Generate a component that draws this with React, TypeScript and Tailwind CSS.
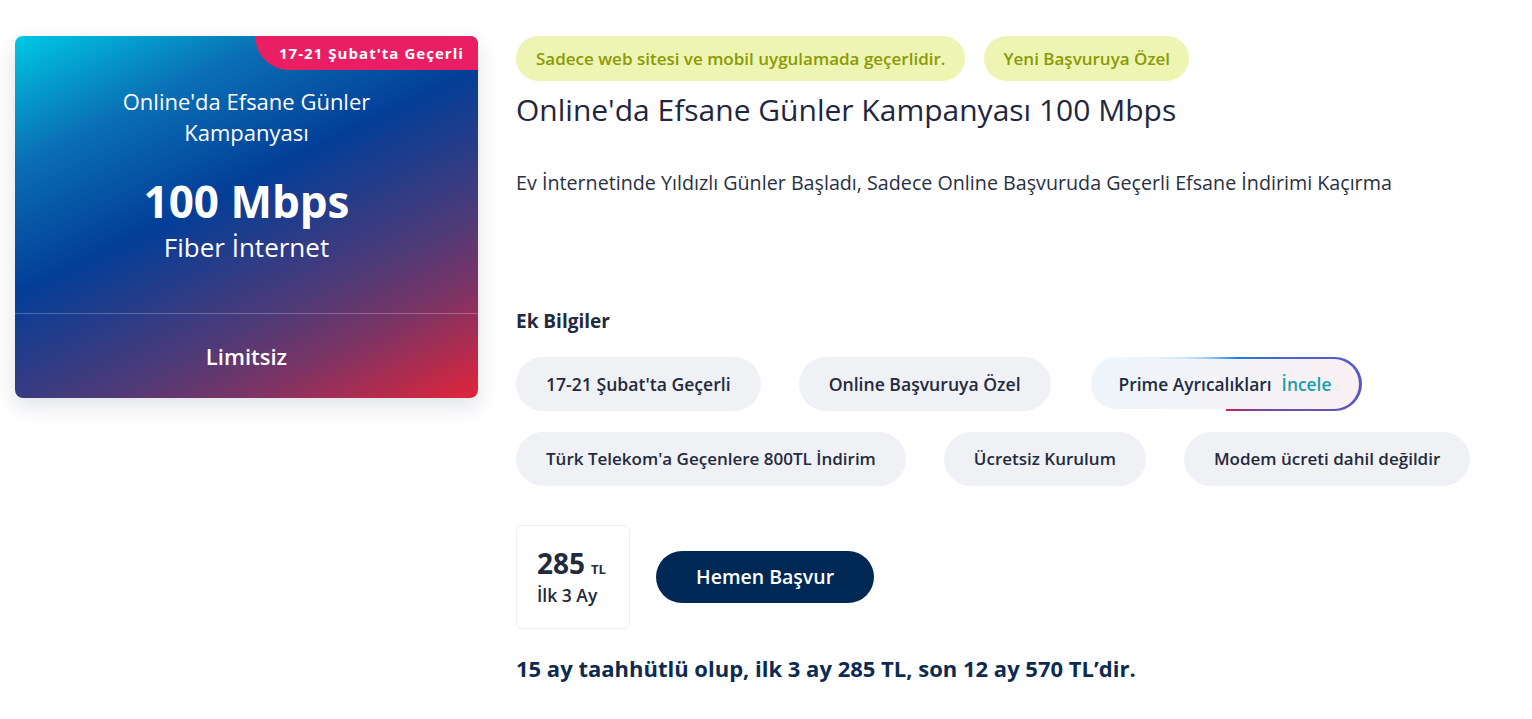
const FONT = "font-['Open_Sans','Liberation_Sans',sans-serif]";

const EXTRAS = [
  ["17-21 Şubat'ta Geçerli", "Online Başvuruya Özel"],
  ["Türk Telekom'a Geçenlere 800TL İndirim", "Ücretsiz Kurulum", "Modem ücreti dahil değildir"],
];

function Chip({ label, big }: { label: string; big?: boolean }) {
  return (
    <div
      className={`h-[54px] px-[30px] flex items-center rounded-full bg-[#f0f1f5] font-semibold text-[#232a3d] ${
        big ? "text-[17.6px]" : "text-[17px]"
      }`}
    >
      {label}
    </div>
  );
}

function PrimeChip() {
  return (
    <div className="rounded-full p-[2px] pr-[3px] bg-[conic-gradient(from_270deg,transparent_0deg,#e8f3fd_20deg,#8cc4f6_60deg,#1580ee_115deg,#4f5fcf_165deg,#6a4fb0_200deg,#a0306f_240deg,#e0164a_270deg,transparent_270deg,transparent_360deg)]">
      <div className="h-[50px] px-[28px] flex items-center gap-[10px] rounded-full bg-linear-to-r from-[#eef5fb] to-[#f9f1f4] text-[17.4px] font-semibold text-[#232a3d]">
        Prime Ayrıcalıkları
        <span className="text-[#1aa0a8]">İncele</span>
      </div>
    </div>
  );
}

function OfferCard() {
  return (
    <div className="relative w-[463px] h-[362px] shrink-0 rounded-[8px] overflow-hidden shadow-[0_8px_22px_rgba(30,40,70,0.14)] bg-[linear-gradient(154deg,#00c8e4_0%,#0a6fb4_22%,#033e98_44%,#4f3a78_69%,#7a3466_80%,#e2243a_100%)] text-white flex flex-col">
      <div className="absolute top-0 right-0 h-[34px] pl-[24px] pr-[14px] flex items-center rounded-bl-[36px] bg-[#ea1f63] text-[15px] font-bold tracking-[0.07em]">
        17-21 Şubat'ta Geçerli
      </div>
      <div className="h-[277px] shrink-0 flex flex-col items-center pt-[50px] text-center">
        <div className="text-[22px] leading-[31px] w-[300px]">Online'da Efsane Günler Kampanyası</div>
        <div className="mt-[31px] text-[44px] leading-[44px] font-bold">100 Mbps</div>
        <div className="mt-[9px] text-[26px] leading-[30px]">Fiber İnternet</div>
      </div>
      <div className="flex-1 border-t border-white/25 flex items-center justify-center text-[22px] font-semibold">
        Limitsiz
      </div>
    </div>
  );
}

export default function App() {
  return (
    <div className={`${FONT} min-h-[719px] bg-white flex gap-[38px] pl-[15px] pt-[36px]`}>
      <OfferCard />
      <div className="flex flex-col">
        <div className="flex gap-[19px]">
          <span className="h-[45px] px-[20px] flex items-center rounded-full bg-[#eef4b2] text-[17px] font-semibold text-[#8a9a05]">
            Sadece web sitesi ve mobil uygulamada geçerlidir.
          </span>
          <span className="h-[45px] px-[19px] flex items-center rounded-full bg-[#eef4b2] text-[17px] font-semibold text-[#8a9a05]">
            Yeni Başvuruya Özel
          </span>
        </div>
        <h1 className="mt-[9px] text-[30px] leading-[40px] text-[#1f2640]">Online'da Efsane Günler Kampanyası 100 Mbps</h1>
        <p className="mt-[39px] text-[19.7px] leading-[28px] text-[#2a2f42]">
          Ev İnternetinde Yıldızlı Günler Başladı, Sadece Online Başvuruda Geçerli Efsane İndirimi Kaçırma
        </p>
        <h2 className="mt-[111px] text-[19px] leading-[26px] font-bold text-[#232a3d]">Ek Bilgiler</h2>
        <div className="mt-[23px] flex flex-col gap-[21px]">
          <div className="flex gap-[38px]">
            {EXTRAS[0].map((e) => (
              <Chip key={e} label={e} big />
            ))}
            <PrimeChip />
          </div>
          <div className="flex gap-[38px]">
            {EXTRAS[1].map((e) => (
              <Chip key={e} label={e} />
            ))}
          </div>
        </div>
        <div className="mt-[39px] flex items-center gap-[26px]">
          <div className="w-[114px] h-[104px] rounded-[5px] border border-[#eeeff2] px-[20px] flex flex-col justify-center text-[#232a3d]">
            <div className="flex items-baseline gap-[6px]">
              <span className="text-[28px] leading-[32px] font-bold">285</span>
              <span className="text-[13px] font-bold">TL</span>
            </div>
            <div className="mt-[4px] text-[17.5px] leading-[24px] font-semibold">İlk 3 Ay</div>
          </div>
          <button className="h-[52px] px-[40px] rounded-full bg-[#002855] text-white text-[19.5px] font-semibold">
            Hemen Başvur
          </button>
        </div>
        <p className="mt-[25px] text-[22px] leading-[28px] font-bold text-[#0d2b50]">
          15 ay taahhütlü olup, ilk 3 ay 285 TL, son 12 ay 570 TL’dir.
        </p>
      </div>
    </div>
  );
}
